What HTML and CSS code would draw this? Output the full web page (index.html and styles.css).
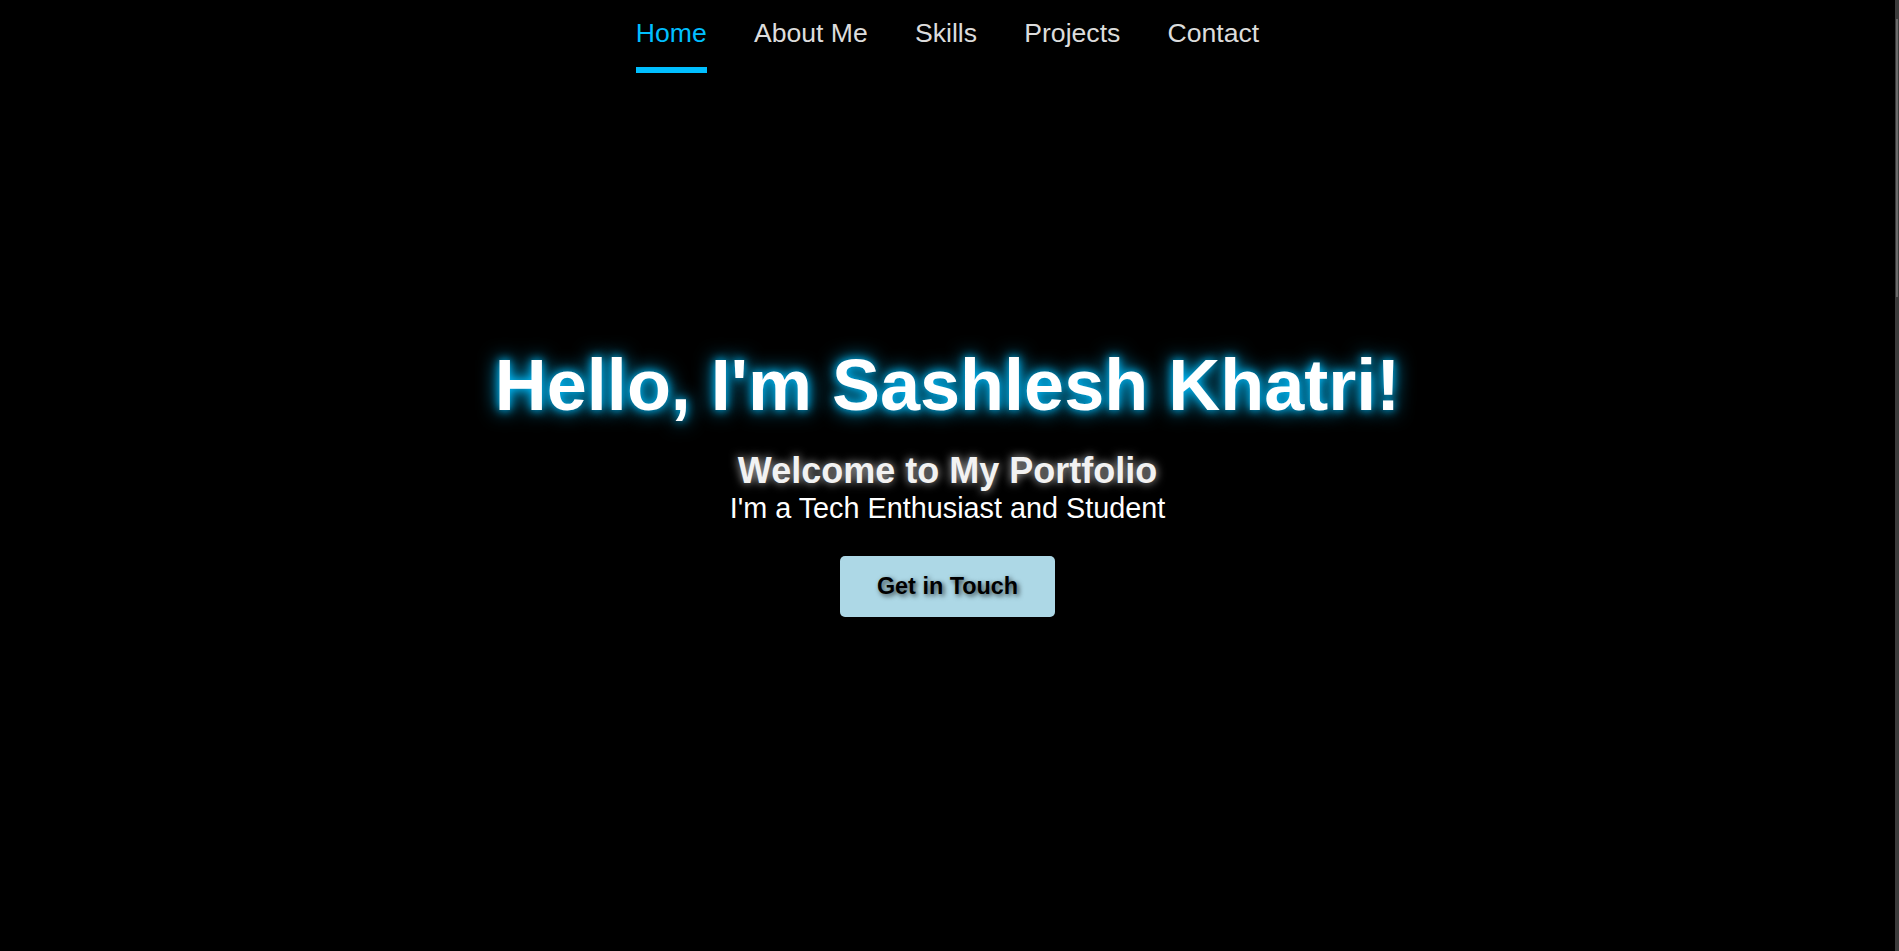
FILE: index.html
```html
<!DOCTYPE html>
<html lang="en">
<head>
<meta charset="utf-8">
<title>Sashlesh Khatri - Portfolio</title>
<link rel="stylesheet" href="styles.css">
</head>
<body>
<div class="page">
  <header class="site-header">
    <nav class="nav">
      <ul class="nav-list">
        <li><a class="nav-link active" href="#home">Home</a></li>
        <li><a class="nav-link" href="#about">About Me</a></li>
        <li><a class="nav-link" href="#skills">Skills</a></li>
        <li><a class="nav-link" href="#projects">Projects</a></li>
        <li><a class="nav-link" href="#contact">Contact</a></li>
      </ul>
    </nav>
  </header>
  <main>
    <section class="hero" id="home">
      <h1 class="hero-title">Hello, I'm Sashlesh Khatri!</h1>
      <h2 class="hero-welcome">Welcome to My Portfolio</h2>
      <p class="hero-sub">I'm a Tech Enthusiast and Student</p>
      <a class="btn" href="#contact">Get in Touch</a>
    </section>
  </main>
</div>
<div class="scrollbar" aria-hidden="true"><div class="scrollbar-thumb"></div></div>
</body>
</html>
```
FILE: styles.css
```css
html {
  background: #000;
}
body {
  margin: 0;
  background: #000;
  color: #fff;
  font-family: "Liberation Sans", Arial, sans-serif;
  overflow: hidden;
}
.page {
  margin-right: 4px;
  height: 951px;
}
.scrollbar {
  position: fixed;
  top: 0;
  right: 0;
  width: 4px;
  height: 100vh;
  background: #3c3c3c;
}
.scrollbar-thumb {
  margin: 19px 1px 0 1px;
  height: 278px;
  background: #6b6b6b;
}
.site-header {
  height: 73px;
}
.nav-list {
  list-style: none;
  margin: 0;
  padding: 18px 0 0;
  display: flex;
  justify-content: center;
  gap: 47.2px;
}
.nav-link {
  display: block;
  font-size: 26.6px;
  line-height: 31px;
  padding-bottom: 18px;
  color: #dcdcdc;
  text-decoration: none;
  border-bottom: 6px solid transparent;
}
.nav-link.active {
  color: #00bfff;
  border-bottom-color: #00bfff;
}
.hero {
  height: 878px;
  box-sizing: border-box;
  padding-top: 271px;
  display: flex;
  flex-direction: column;
  align-items: center;
  text-align: center;
}
.hero-title {
  margin: 0 0 24px;
  font-size: 72px;
  font-weight: bold;
  color: #fff;
  text-shadow: 0 0 10px #00bfff, 0 0 20px #00bfff;
}
.hero-welcome {
  margin: 0;
  font-size: 36px;
  font-weight: bold;
  color: #f2f2f2;
  text-shadow: 0 0 10px rgba(255, 255, 255, 0.75);
}
.hero-sub {
  margin: 0;
  font-size: 28.8px;
  color: #fff;
}
.btn {
  margin-top: 31px;
  padding: 17px 37px;
  background: #add8e6;
  color: #000;
  font-size: 23.4px;
  font-weight: bold;
  text-decoration: none;
  border-radius: 5px;
  text-shadow: 2px 2px 5px rgba(0, 0, 0, 0.7);
}
```
